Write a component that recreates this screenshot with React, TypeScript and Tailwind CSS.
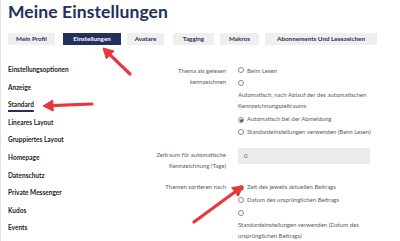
import React from 'react'

const tabs = [
  { label: 'Mein Profil', cls: 'ml-0 w-[47px]', active: false },
  { label: 'Einstellungen', cls: 'ml-[8px] w-[58px]', active: true },
  { label: 'Avatare', cls: 'ml-[6px] w-[37px]', active: false },
  { label: 'Tagging', cls: 'ml-[9px] w-[41px]', active: false },
  { label: 'Makros', cls: 'ml-[6px] w-[39px]', active: false },
  { label: 'Abonnements Und Lesezeichen', cls: 'ml-[6px] w-[112px]', active: false },
]

const navItems = [
  'Einstellungsoptionen',
  'Anzeige',
  'Standard',
  'Lineares Layout',
  'Gruppiertes Layout',
  'Homepage',
  'Datenschutz',
  'Private Messenger',
  'Kudos',
  'Events',
]

function Radio({ checked }: { checked?: boolean }) {
  return (
    <span className="inline-flex items-center justify-center w-[6px] h-[6px] rounded-full border-[0.8px] border-[#8a8a8a] bg-white align-[-0.5px] mr-[3px]">
      {checked && <span className="w-[3px] h-[3px] rounded-full bg-[#555]" />}
    </span>
  )
}

// red annotation arrow, drawn from tail (x1,y1) to tip (x2,y2)
function Arrow({ x1, y1, x2, y2 }: { x1: number; y1: number; x2: number; y2: number }) {
  const dx = x2 - x1
  const dy = y2 - y1
  const len = Math.sqrt(dx * dx + dy * dy)
  const ux = dx / len
  const uy = dy / len
  const headLen = 10
  const headW = 5.5
  const bx = x2 - ux * headLen
  const by = y2 - uy * headLen
  const px = -uy
  const py = ux
  const pts = `${x2},${y2} ${bx + px * headW},${by + py * headW} ${bx - px * headW},${by - py * headW}`
  return (
    <g>
      <line x1={x1} y1={y1} x2={bx + ux * 2} y2={by + uy * 2} stroke="#e8373c" strokeWidth={3.2} strokeLinecap="round" />
      <polygon points={pts} fill="#e8373c" stroke="#e8373c" strokeWidth={1} strokeLinejoin="round" />
    </g>
  )
}

export default function App() {
  return (
    <div className="relative w-[400px] h-[241px] overflow-hidden bg-white border-l border-[#e4e4e4] font-['Lato',sans-serif]">
      {/* Header */}
      <h1 className="pl-[7px] pt-[1px] text-[17.5px] leading-[22px] font-bold text-[#232f5c] tracking-[0.1px]">
        Meine Einstellungen
      </h1>

      {/* Tabs */}
      <div className="flex pl-[7px] mt-[10px]">
        {tabs.map((t) => (
          <div
            key={t.label}
            className={`${t.cls} h-[12px] flex items-center justify-center text-[6.3px] font-bold whitespace-nowrap ${
              t.active ? 'bg-[#24305e] text-white' : 'bg-[#efefef] text-[#2b3150]'
            }`}
          >
            {t.label}
          </div>
        ))}
      </div>

      {/* Body */}
      <div className="flex pt-[16px]">
        {/* Left nav */}
        <div className="w-[133px] pl-[7px] flex flex-col">
          {navItems.map((item) => (
            <div key={item} className="h-[17.6px] leading-[17.6px] text-[6.5px] font-bold text-[#1d1d1d] whitespace-nowrap">
              {item === 'Standard' ? (
                <span className="underline decoration-[1.5px] decoration-[#232f5c] underline-offset-[3px]">{item}</span>
              ) : (
                item
              )}
            </div>
          ))}
        </div>

        {/* Settings form */}
        <div className="flex flex-col text-[6px] leading-[11px] text-[#5b5b5b] pt-[3.7px]">
          <div className="flex gap-[12px]">
            <div className="w-[92px] text-right">Thema als gelesen<br />kennzeichnen</div>
            <div className="w-[132px] flex flex-col gap-[2.2px]">
              <div><Radio />Beim Lesen</div>
              <div>
                <div><Radio /></div>
                <div>Automatisch, nach Ablauf der des automatischen Kennzeichnungszeitraums</div>
              </div>
              <div><Radio checked />Automatisch bei der Abmeldung</div>
              <div className="whitespace-nowrap"><Radio />Standardeinstellungen verwenden (Beim Lesen)</div>
            </div>
          </div>

          <div className="flex gap-[12px] mt-[10.5px]">
            <div className="w-[92px] text-right pt-[1.5px]">Zeitraum für automatische<br />Kennzeichnung (Tage)</div>
            <div className="w-[132px] h-[16px] rounded-[2px] bg-[#ebebeb] flex items-center px-[6px] text-[#666]">0</div>
          </div>

          <div className="flex gap-[12px] mt-[10px]">
            <div className="w-[92px] text-right">Themen sortieren nach</div>
            <div className="w-[132px] flex flex-col gap-[2.2px]">
              <div><Radio checked />Zeit des jeweils aktuellen Beitrags</div>
              <div><Radio />Datum des ursprünglichen Beitrags</div>
              <div>
                <div><Radio /></div>
                <div>Standardeinstellungen verwenden (Datum des ursprünglichen Beitrags)</div>
              </div>
            </div>
          </div>
        </div>
      </div>

      {/* Annotation arrows */}
      <svg className="absolute left-0 top-0 pointer-events-none" width={400} height={241} viewBox="0 0 400 241">
        <Arrow x1={129} y1={74} x2={102} y2={48} />
        <Arrow x1={91} y1={104} x2={42} y2={106} />
        <Arrow x1={193} y1={222} x2={242} y2={186} />
      </svg>
    </div>
  )
}
